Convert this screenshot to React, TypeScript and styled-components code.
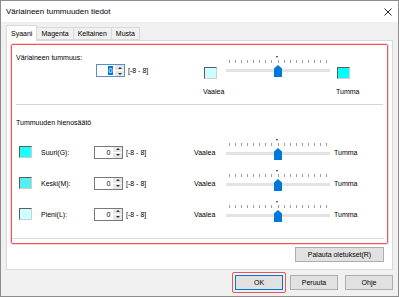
import React from 'react'
import styled, { createGlobalStyle } from 'styled-components'

const GlobalStyle = createGlobalStyle`
  html, body {
    margin: 0;
    padding: 0;
    background: #f0f0f0;
  }
  body {
    font-family: "Liberation Sans", Arial, sans-serif;
    font-size: 7px;
    color: #000;
  }
`

const Window = styled.div`
  width: 399px;
  height: 297px;
  box-sizing: border-box;
  border: 1px solid #8c8c8c;
  background: #f0f0f0;
  display: flex;
  flex-direction: column;
  overflow: hidden;
`

const TitleBar = styled.div`
  height: 21px;
  flex: none;
  background: #fff;
  display: flex;
  align-items: center;
  justify-content: space-between;
  padding: 0 6px 0 5px;
  font-size: 8px;
`

const Tabs = styled.div`
  display: flex;
  align-items: flex-end;
  height: 15px;
  margin: 3px 0 0 5px;
  position: relative;
  z-index: 1;
`

const Tab = styled.div<{ $active?: boolean }>`
  height: ${p => (p.$active ? 16 : 13)}px;
  box-sizing: border-box;
  padding: 0 4px;
  margin-left: -1px;
  display: flex;
  align-items: center;
  border: 1px solid #d9d9d9;
  border-bottom: ${p => (p.$active ? 'none' : '1px solid #d9d9d9')};
  background: ${p => (p.$active ? '#fff' : '#f0f0f0')};
  margin-bottom: ${p => (p.$active ? '-1px' : '0')};
  &:first-child { margin-left: 0; }
`

const Panel = styled.div`
  margin: 0 5px;
  height: 230px;
  flex: none;
  box-sizing: border-box;
  background: #fff;
  border: 1px solid #d9d9d9;
  padding: 3px 4px 0 4px;
  display: flex;
  flex-direction: column;
`

const RedBox = styled.div`
  height: 200px;
  box-sizing: border-box;
  border: 1px solid #e8565a;
  border-radius: 2px;
  box-shadow: 0 0 0 1px rgba(240, 140, 140, 0.35);
  display: flex;
  flex-direction: column;
`

const TopSection = styled.div`
  height: 59px;
  display: flex;
`

const LeftCol = styled.div`
  width: 192px;
  box-sizing: border-box;
  padding: 7.5px 0 0 4px;
`

const Label = styled.div`
  line-height: 9px;
  white-space: nowrap;
`

const SpinRow = styled.div`
  display: flex;
  align-items: center;
  margin: 2.5px 0 0 80px;
`

const RightCol = styled.div`
  padding-top: 11px;
`

const SwatchRow = styled.div`
  display: flex;
  align-items: flex-start;
`

const Swatch = styled.div<{ $color: string; $top?: number }>`
  width: 13px;
  height: 12px;
  flex: none;
  box-sizing: border-box;
  margin-top: ${p => p.$top ?? 0}px;
  background: ${p => p.$color};
  border: 1px solid;
  border-color: #5c5c5c #cfcfcf #cfcfcf #5c5c5c;
`

const EndLabels = styled.div`
  display: grid;
  grid-template-columns: 133px auto;
  margin: 7.5px 0 0 -1px;
  line-height: 9px;
`

const Separator = styled.div`
  height: 1px;
  background: #d5d5d5;
  margin: 0 4px;
`

const SectionTitle = styled.div`
  line-height: 9px;
  margin: 13px 0 0 4px;
`

const Rows = styled.div`
  margin-top: 9.5px;
  padding-left: 7px;
`

const Row = styled.div`
  height: 31px;
  display: grid;
  grid-template-columns: 22px 53px 100px 32px 108px auto;
  align-items: center;
`

const SliderCell = styled.div`
  margin-top: -4px;
`

const BottomRule = styled.div`
  height: 1px;
  background: #dcdcdc;
  margin: 8px 3px 0 0;
`

const SliderFrame = styled.div<{ $gap?: string }>`
  position: relative;
  width: 104px;
  height: 22px;
  flex: none;
  margin: ${p => p.$gap ?? '0'};
`

const Marker = styled.div`
  position: absolute;
  top: 0;
  left: 50px;
  width: 0;
  height: 0;
  border-left: 1.5px solid transparent;
  border-right: 1.5px solid transparent;
  border-top: 2px solid #333;
`

const Ticks = styled.div`
  position: absolute;
  top: 4px;
  left: 3px;
  right: 3px;
  height: 3px;
  display: flex;
  justify-content: space-between;
`

const Tick = styled.span`
  width: 1px;
  height: 3px;
  background: #a0a0a0;
`

const Track = styled.div`
  position: absolute;
  top: 13px;
  left: 0;
  right: 0;
  height: 3px;
  background: #e3e3e3;
`

const Thumb = styled.svg`
  position: absolute;
  top: 9px;
  left: 48px;
`

const SpinBox = styled.div<{ $focus?: boolean }>`
  display: flex;
  width: 29px;
  height: 13px;
  box-sizing: border-box;
  border: 1px solid ${p => (p.$focus ? '#5a8ec9' : '#7a7a7a')};
  background: #fff;
`

const SpinValue = styled.div`
  flex: 1;
  display: flex;
  align-items: center;
  justify-content: flex-end;
  padding-right: 2px;
`

const Selected = styled.span<{ $on?: boolean }>`
  line-height: 9px;
  padding: 0 0.5px;
  background: ${p => (p.$on ? '#0078d7' : 'transparent')};
  color: ${p => (p.$on ? '#fff' : '#000')};
`

const SpinArrows = styled.div`
  width: 9px;
  display: flex;
  flex-direction: column;
  gap: 1px;
  background: #fff;
`

const Arrow = styled.div<{ $down?: boolean }>`
  flex: 1;
  background: #e6e6e6;
  display: flex;
  align-items: center;
  justify-content: center;
  &::after {
    content: '';
    border-left: 2px solid transparent;
    border-right: 2px solid transparent;
    ${p => (p.$down ? 'border-top: 2px solid #333;' : 'border-bottom: 2px solid #333;')}
  }
`

const Range = styled.span`
  margin-left: 3px;
  white-space: nowrap;
`

const ResetRow = styled.div`
  display: flex;
  justify-content: flex-end;
  margin: 3px 4px 0 0;
`

const Button = styled.div<{ $width: number; $default?: boolean }>`
  width: ${p => p.$width}px;
  height: 15px;
  box-sizing: border-box;
  background: #e1e1e1;
  border: 1px solid ${p => (p.$default ? '#0078d7' : '#adadad')};
  display: flex;
  align-items: center;
  justify-content: center;
  white-space: nowrap;
`

const ButtonBar = styled.div`
  display: flex;
  justify-content: flex-end;
  align-items: flex-start;
  padding: 2px 5px 0 0;
  gap: 4px;
  & > :last-child { margin-left: 3px; }
`

const Plain = styled.div`
  margin-top: 3px;
`

const Highlight = styled.div`
  padding: 2px;
  border: 1px solid #e8565a;
  border-radius: 2px;
`

function Slider({ gap }: { gap?: string }) {
  return (
    <SliderFrame $gap={gap}>
      <Marker />
      <Ticks>
        {Array.from({ length: 17 }, (_, i) => <Tick key={i} />)}
      </Ticks>
      <Track />
      <Thumb width="8" height="12" viewBox="0 0 8 12">
        <path d="M4 0 L8 3.5 L8 12 L0 12 L0 3.5 Z" fill="#0078d7" />
      </Thumb>
    </SliderFrame>
  )
}

function Spin({ focus }: { focus?: boolean }) {
  return (
    <SpinRowInner>
      <SpinBox $focus={focus}>
        <SpinValue><Selected $on={focus}>0</Selected></SpinValue>
        <SpinArrows>
          <Arrow />
          <Arrow $down />
        </SpinArrows>
      </SpinBox>
      <Range>[-8 - 8]</Range>
    </SpinRowInner>
  )
}

const SpinRowInner = styled.div`
  display: flex;
  align-items: center;
`

const fineRows = [
  { label: 'Suuri(G):', color: '#1affff' },
  { label: 'Keski(M):', color: '#52f0f0' },
  { label: 'Pieni(L):', color: '#ccffff' },
]

export default function App() {
  return (
    <>
      <GlobalStyle />
      <Window>
        <TitleBar>
          <span>Väriaineen tummuuden tiedot</span>
          <svg width="8" height="8" viewBox="0 0 8 8">
            <path d="M0.5 0.5 L7.5 7.5 M7.5 0.5 L0.5 7.5" stroke="#111" strokeWidth="0.9" />
          </svg>
        </TitleBar>

        <Tabs>
          <Tab $active>Syaani</Tab>
          <Tab>Magenta</Tab>
          <Tab>Keltainen</Tab>
          <Tab>Musta</Tab>
        </Tabs>

        <Panel>
          <RedBox>
            <TopSection>
              <LeftCol>
                <Label>Väriaineen tummuus:</Label>
                <SpinRow>
                  <Spin focus />
                </SpinRow>
              </LeftCol>
              <RightCol>
                <SwatchRow>
                  <Swatch $color="#ccffff" $top={11} />
                  <Slider gap="0 7px 0 9px" />
                  <Swatch $color="#00ffff" $top={11} />
                </SwatchRow>
                <EndLabels>
                  <span>Vaalea</span>
                  <span>Tumma</span>
                </EndLabels>
              </RightCol>
            </TopSection>

            <Separator />
            <SectionTitle>Tummuuden hienosäätö</SectionTitle>

            <Rows>
              {fineRows.map(r => (
                <Row key={r.label}>
                  <Swatch $color={r.color} />
                  <Label>{r.label}</Label>
                  <Spin />
                  <Label>Vaalea</Label>
                  <SliderCell><Slider /></SliderCell>
                  <Label>Tumma</Label>
                </Row>
              ))}
            </Rows>
            <BottomRule />
          </RedBox>

          <ResetRow>
            <Button $width={89}>Palauta oletukset(R)</Button>
          </ResetRow>
        </Panel>

        <ButtonBar>
          <Highlight>
            <Button $width={48} $default>OK</Button>
          </Highlight>
          <Plain><Button $width={48}>Peruuta</Button></Plain>
          <Plain><Button $width={48}>Ohje</Button></Plain>
        </ButtonBar>
      </Window>
    </>
  )
}
